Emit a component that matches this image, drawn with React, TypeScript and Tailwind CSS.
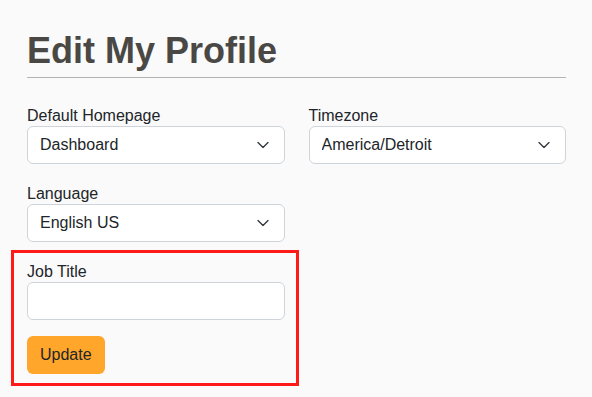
import React from 'react';

const font = { fontFamily: '"Liberation Sans", Arial, Helvetica, sans-serif' };

function Chevron() {
  return (
    <svg
      className="pointer-events-none absolute right-[16px] top-1/2 -translate-y-1/2"
      width="12"
      height="7"
      viewBox="0 0 12 7"
      fill="none"
    >
      <path d="M1 1 L6 6 L11 1" stroke="#343a40" strokeWidth="1.4" strokeLinecap="round" strokeLinejoin="round" />
    </svg>
  );
}

function SelectField({ label, value, options }: { label: string; value: string; options: string[] }) {
  return (
    <div className="flex flex-col">
      <label className="h-[20px] text-[16px] leading-[20px] text-[#212529]">{label}</label>
      <div className="relative">
        <select
          defaultValue={value}
          className="h-[38px] w-full appearance-none rounded-[6px] border border-[#ced4da] bg-white pl-[12px] pr-[36px] text-[16px] text-[#212529] outline-none"
          style={font}
        >
          {options.map((o) => (
            <option key={o}>{o}</option>
          ))}
        </select>
        <Chevron />
      </div>
    </div>
  );
}

export default function App() {
  return (
    <div className="min-h-screen bg-[#fafafa] px-[27px] pt-[29px] pb-6" style={font}>
      <div className="w-[539px]">
        <h1 className="border-b border-[#b3b3b3] pb-[5px] text-[36px] font-bold leading-[43px] text-[#4a4845]">
          Edit My Profile
        </h1>

        <div className="mt-[28px] grid grid-cols-2 gap-x-6 gap-y-5">
          <SelectField label="Default Homepage" value="Dashboard" options={['Dashboard', 'Reports', 'Calendar']} />
          <SelectField label="Timezone" value="America/Detroit" options={['America/Detroit', 'America/Chicago', 'America/New_York']} />
          <SelectField label="Language" value="English US" options={['English US', 'English UK', 'Español']} />
          <div />

          <div className="ml-[-16px] mr-[-14px] mt-[-12px] border-[3px] border-[#ff1a1a] pl-[13px] pr-[11px] pt-[9px] pb-[9px]">
            <label className="block h-[20px] text-[16px] leading-[20px] text-[#212529]">Job Title</label>
            <input
              type="text"
              className="block h-[38px] w-full rounded-[6px] border border-[#ced4da] bg-white px-[12px] text-[16px] text-[#212529] outline-none"
              style={font}
            />
            <button
              type="button"
              className="mt-[16px] h-[38px] rounded-[6px] bg-[#ffa62b] px-[13px] text-[16px] text-[#212529]"
              style={font}
            >
              Update
            </button>
          </div>
        </div>
      </div>
    </div>
  );
}
